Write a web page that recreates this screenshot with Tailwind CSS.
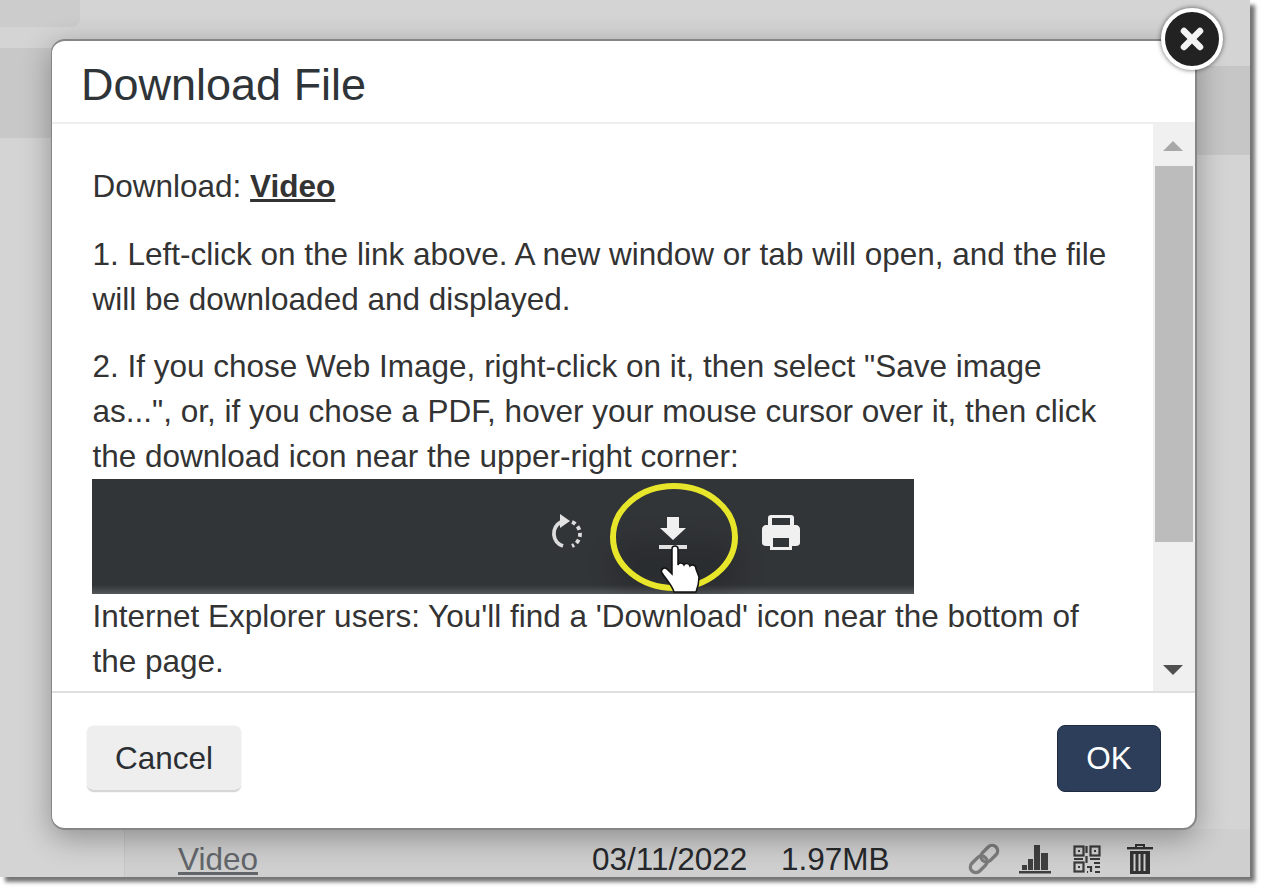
<!DOCTYPE html>
<html lang="en">
<head>
<meta charset="utf-8">
<title>Download File</title>
<script src="https://cdn.jsdelivr.net/npm/@tailwindcss/browser@4"></script>
</head>
<body class="bg-white overflow-hidden font-['Liberation_Sans',Arial,sans-serif]">
<div class="w-[1265px] h-[892px] relative overflow-hidden">
  <!-- backdrop window -->
  <div class="w-[1250px] h-[877px] bg-[#d4d4d4] shadow-[5px_5px_4px_rgba(0,0,0,0.55)] relative overflow-hidden flex flex-col">
    <div class="w-[80px] h-[27px] bg-[#cccccc] rounded-br-lg"></div>
    <div class="h-[21px]"></div>
    <div class="flex h-[90px]">
      <div class="w-[52px] bg-[#c8c8c8]"></div>
    </div>
    <div class="flex-1"></div>
    <div class="h-[48px] flex">
      <div class="w-[125px] border-r border-[#c6c6c6]"></div>
      <div class="flex-1 bg-[#cfcfcf] flex items-end h-full">
        <span class="ml-[53px] text-[31.5px] leading-[36px] text-[#62666b] underline w-[414px]">Video</span>
        <span class="text-[31.5px] leading-[36px] text-[#26282b] w-[189px]">03/11/2022</span>
        <span class="text-[31.5px] leading-[36px] text-[#26282b] w-[186px]">1.97MB</span>
        <div class="flex items-center h-[36px] -mt-[1px]">
          <svg class="blur-[0.4px]" width="34" height="32" viewBox="0 0 34 32" fill="none" stroke="#7b7b7b" stroke-width="3.400"><g transform="rotate(-45 17 16)"><rect x="0" y="10.500" width="19" height="11" rx="5.500"/><rect x="15" y="10.500" width="19" height="11" rx="5.500"/></g></svg>
          <svg class="ml-[18px] blur-[0.4px]" width="32" height="30" viewBox="0 0 32 30" fill="#3f3f3f"><rect x="0" y="27" width="32" height="2.500"/><rect x="3" y="21" width="5" height="5"/><rect x="9" y="15" width="5" height="11"/><rect x="15" y="1" width="6" height="25"/><rect x="22" y="9" width="7" height="17"/></svg>
          <svg class="ml-[22px] blur-[0.4px]" width="28" height="28" viewBox="0 0 28 28" fill="none" stroke="#3a3a3a" stroke-width="2.200"><rect x="1.500" y="1.500" width="9" height="9"/><rect x="17.500" y="1.500" width="9" height="9"/><rect x="1.500" y="17.500" width="9" height="9"/><path d="M13.500 1v7M13.500 11v7M1 14h9M17 14h10M14 22h4v5M21 18h6M22 22h5M14 27h1M22 27h5"/><rect x="5" y="5" width="2" height="2" fill="#3a3a3a" stroke="none"/><rect x="21" y="5" width="2" height="2" fill="#3a3a3a" stroke="none"/><rect x="5" y="21" width="2" height="2" fill="#3a3a3a" stroke="none"/></svg>
          <svg class="ml-[26px] blur-[0.3px]" width="26" height="32" viewBox="0 0 26 32" fill="#333"><rect x="0" y="4" width="26" height="2.400"/><path d="M8 4V1h10v3h-2V3H10v1z"/><path d="M3 8h20v23H3zM6.500 11v17h2V11zM11.500 11v17h2V11zM16.500 11v17h2V11z" fill-rule="evenodd"/></svg>
        </div>
      </div>
    </div>
  </div>
  <div class="absolute left-[1196px] top-[66px] w-[54px] h-[89px] bg-[#c6c6c6]"></div>

  <!-- modal -->
  <div class="absolute left-[51px] top-[39px] w-[1146px] h-[791px] bg-white rounded-[14px] border-2 border-[#868686] border-l-[1.5px] shadow-[0_8px_30px_rgba(0,0,0,0.32)] flex flex-col overflow-hidden text-[#333333]">
    <div class="h-[83px] shrink-0 border-b-[2px] border-[#efefef] flex items-center pl-[29px] pt-[7px]">
      <h1 class="text-[45px] leading-[50px] text-[#2f3438] font-normal">Download File</h1>
    </div>
    <div class="h-[569px] shrink-0 flex border-b-[2px] border-[#dfdfdf]">
      <div class="flex-1 pl-[40.5px] pt-[40px] text-[31.5px] leading-[45px] overflow-hidden">
        <p class="h-[45px]">Download: <a class="font-bold underline">Video</a></p>
        <p class="mt-[23px]">1. Left-click on the link above. A new window or tab will open, and the file<br>will be downloaded and displayed.</p>
        <p class="mt-[22px]">2. If you chose Web Image, right-click on it, then select "Save image<br>as...", or, if you chose a PDF, hover your mouse cursor over it, then click<br>the download icon near the upper-right corner:</p>
        <div class="w-[822px] h-[115px] bg-[#323538] -ml-[0.5px] relative overflow-hidden">
          <div class="absolute left-0 right-0 bottom-0 h-[9px] bg-gradient-to-b from-[#323538] to-[#55585b]"></div>
          <div class="absolute left-[520px] top-[60px] w-[130px] h-[55px] rounded-full bg-black/15 blur-md"></div>
          <svg class="absolute left-0 top-0 blur-[0.5px]" width="822" height="115" viewBox="0 0 822 115" fill="none">
            <g stroke="#dcdcdc" stroke-width="3.800">
              <path d="M469 43a13 13 0 0 0 2 24" />
              <path d="M480 43a13 13 0 0 1 0 24" stroke-dasharray="4 3" />
            </g>
            <path d="M468 35l10 7-10 7z" fill="#e2e2e2"/>
            <ellipse cx="582" cy="58" rx="61" ry="51" stroke="#e8e62a" stroke-width="6"/>
            <path d="M575 38h12v11h7l-13 12-13-12h7z" fill="#f0f0f0"/>
            <rect x="567" y="66" width="28" height="4" fill="#e0e0e0"/>
            <path d="M580 70c0-4 6-4 6 0v16c1-3 5-2 6 0 1-2 5-2 6 1 2-2 6-1 6 3l3 8c0 5-1 10-3 15h-22c-2-7-9-14-12-19-2-4 3-7 6-3l4 4z" fill="#ffffff" stroke="#111111" stroke-width="1.500"/>
            <path d="M676 46V39c0-2 1-3 3-3h20c2 0 3 1 3 3v7h2c2 0 4 2 4 4v14c0 2-2 3-4 3h-4v4h-22v-4h-4c-2 0-4-1-4-3V50c0-2 2-4 4-4zM680 39v7h18v-7zM681 59v9h16v-9z" fill="#f0f0f0" fill-rule="evenodd"/>
          </svg>
        </div>
        <p>Internet Explorer users: You'll find a 'Download' icon near the bottom of<br>the page.</p>
      </div>
      <!-- scrollbar -->
      <div class="w-[42px] shrink-0 bg-[#f0f0f0] flex flex-col items-center">
        <div class="h-[42px] shrink-0 w-full flex items-center justify-center pt-[2px] pr-[2px]">
          <div class="w-0 h-0 border-x-[10px] border-x-transparent border-b-[10px] border-b-[#a8a8a8]"></div>
        </div>
        <div class="w-[38px] h-[376px] bg-[#bcbcbc]"></div>
        <div class="flex-1"></div>
        <div class="h-[42px] shrink-0 w-full flex items-center justify-center pb-[1px] pr-[2px]">
          <div class="w-0 h-0 border-x-[10px] border-x-transparent border-t-[10px] border-t-[#505050]"></div>
        </div>
      </div>
    </div>
    <div class="flex-1 flex items-center justify-between pl-[35px] pr-[34px] pb-[3px]">
      <button class="w-[154px] h-[66px] rounded-[7px] bg-[#eeeeee] border-b-[2px] border-[#d6d6d6] shadow-[0_0_2px_rgba(0,0,0,0.12)] text-[31.5px] text-[#2b2f33] pt-[2px]">Cancel</button>
      <button class="w-[104px] h-[67px] rounded-[8px] bg-[#2c3e59] border border-[#1f2c40] text-[31.5px] text-white mb-[1px]">OK</button>
    </div>
  </div>

  <!-- close button -->
  <div class="absolute left-[1161px] top-[8px] w-[62px] h-[62px] rounded-full bg-[#222222] border-[4px] border-white shadow-[0_0_5px_rgba(0,0,0,0.6)] flex items-center justify-center">
    <svg width="26" height="26" viewBox="0 0 26 26" stroke="#f4f4f4" stroke-width="6.500" stroke-linecap="round"><path d="M5 5l16 16M21 5L5 21"/></svg>
  </div>
</div>
</body>
</html>
